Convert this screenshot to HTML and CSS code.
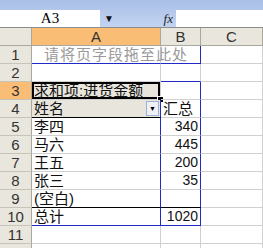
FILE: index.html
```html
<!DOCTYPE html>
<html lang="zh">
<head>
  <meta charset="UTF-8">
  <title>数据透视表</title>
  <link rel="stylesheet" href="styles.css">
</head>
<body>
  <div class="formula-bar">
    <div class="name-box">A3</div>
    <div class="name-drop">&#9660;</div>
    <div class="fx">fx</div>
    <div class="formula-input"></div>
  </div>
  <table class="sheet">
    <colgroup>
      <col class="col-head">
      <col class="col-a">
      <col class="col-b">
      <col class="col-c">
    </colgroup>
    <tr class="head-row">
      <th class="corner"></th>
      <th class="sel">A</th>
      <th>B</th>
      <th>C</th>
    </tr>
    <tr>
      <th>1</th>
      <td class="page-area bb-blue">请将页字段拖至此处</td>
      <td class="bb-blue br-blue"></td>
      <td></td>
    </tr>
    <tr>
      <th>2</th>
      <td></td>
      <td class="bb-blue"></td>
      <td></td>
    </tr>
    <tr>
      <th class="sel">3</th>
      <td class="active field">求和项:进货金额<span class="fill-handle"></span></td>
      <td class="br-blue"></td>
      <td></td>
    </tr>
    <tr>
      <th>4</th>
      <td class="field bb-black br-blue">姓名<span class="drop-btn">&#9660;</span></td>
      <td class="br-blue">汇总</td>
      <td></td>
    </tr>
    <tr>
      <th>5</th>
      <td class="br-blue">李四</td>
      <td class="num br-blue">340</td>
      <td></td>
    </tr>
    <tr>
      <th>6</th>
      <td class="br-blue">马六</td>
      <td class="num br-blue">445</td>
      <td></td>
    </tr>
    <tr>
      <th>7</th>
      <td class="br-blue">王五</td>
      <td class="num br-blue">200</td>
      <td></td>
    </tr>
    <tr>
      <th>8</th>
      <td class="br-blue">张三</td>
      <td class="num br-blue">35</td>
      <td></td>
    </tr>
    <tr>
      <th>9</th>
      <td class="br-blue bb-black">(空白)</td>
      <td class="br-blue bb-black"></td>
      <td></td>
    </tr>
    <tr>
      <th>10</th>
      <td class="br-blue bb-blue">总计</td>
      <td class="num br-blue bb-blue">1020</td>
      <td></td>
    </tr>
    <tr>
      <th>11</th>
      <td></td>
      <td></td>
      <td></td>
    </tr>
    <tr>
      <th>12</th>
      <td></td>
      <td></td>
      <td></td>
    </tr>
  </table>
</body>
</html>
```

FILE: styles.css
```css
body {
  margin: 0;
  padding: 0;
  width: 263px;
  height: 248px;
  overflow: hidden;
  background-color: #fff;
  font-family: "Liberation Sans", "Noto Sans CJK SC", sans-serif;
}
.formula-bar {
  height: 28px;
  display: flex;
  align-items: flex-end;
  background: linear-gradient(#a9bfe8, #c3d4f1);
  border-bottom: 1px solid #8c8c8c;
  box-sizing: border-box;
}
.name-box {
  width: 100px;
  height: 17px;
  background-color: #fff;
  font-family: "Liberation Serif", serif;
  font-size: 15px;
  line-height: 17px;
  text-align: center;
  color: #000;
}
.name-drop {
  width: 18px;
  height: 17px;
  font-size: 10px;
  line-height: 17px;
  text-align: center;
  color: #111;
}
.fx {
  width: 58px;
  height: 17px;
  box-sizing: border-box;
  padding-right: 3px;
  text-align: right;
  font-family: "Liberation Serif", serif;
  font-style: italic;
  font-size: 13px;
  line-height: 17px;
  color: #222;
}
.formula-input {
  flex: 1;
  height: 17px;
  background-color: #fff;
}
.sheet {
  border-collapse: separate;
  border-spacing: 0;
  table-layout: fixed;
  width: 263px;
}
.col-head { width: 32px; }
.col-a { width: 129px; }
.col-b { width: 40px; }
.col-c { width: 62px; }
.sheet th,
.sheet td {
  height: 17px;
  padding: 0;
  border-right: 1px solid #d0d0d0;
  border-bottom: 1px solid #d0d0d0;
  font-size: 15px;
  line-height: 17px;
  white-space: nowrap;
  overflow: visible;
}
.sheet th {
  background-color: #e9e7dd;
  border-right-color: #aaa89c;
  border-bottom-color: #c6c4b8;
  font-weight: normal;
  color: #333;
  text-align: center;
}
.head-row th {
  border-bottom-color: #aaa89c;
}
.sheet th.sel {
  background-color: #f9bd76;
}
.sheet td {
  padding-left: 2px;
  color: #111;
  position: relative;
}
.sheet td.num {
  text-align: right;
  padding-right: 2px;
  font-size: 14px;
}
.page-area {
  padding-left: 12px !important;
  color: #9a9a9a !important;
  letter-spacing: 1px;
}
.field {
  background-color: #e8e6dc;
}
.active {
  box-shadow: inset 0 0 0 2px #000;
}
.fill-handle {
  position: absolute;
  right: -4px;
  bottom: -4px;
  width: 5px;
  height: 5px;
  background-color: #000;
  border: 1px solid #fff;
}
.drop-btn {
  position: absolute;
  right: 1px;
  top: 1px;
  width: 13px;
  height: 15px;
  box-sizing: border-box;
  border: 1px solid #9db0d8;
  background-color: #eef0f6;
  font-size: 7px;
  line-height: 13px;
  text-align: center;
  color: #000;
}
.bb-blue { border-bottom-color: #1f2bc4 !important; }
.br-blue { border-right-color: #1f2bc4 !important; }
.bb-black { border-bottom-color: #000 !important; }
```
